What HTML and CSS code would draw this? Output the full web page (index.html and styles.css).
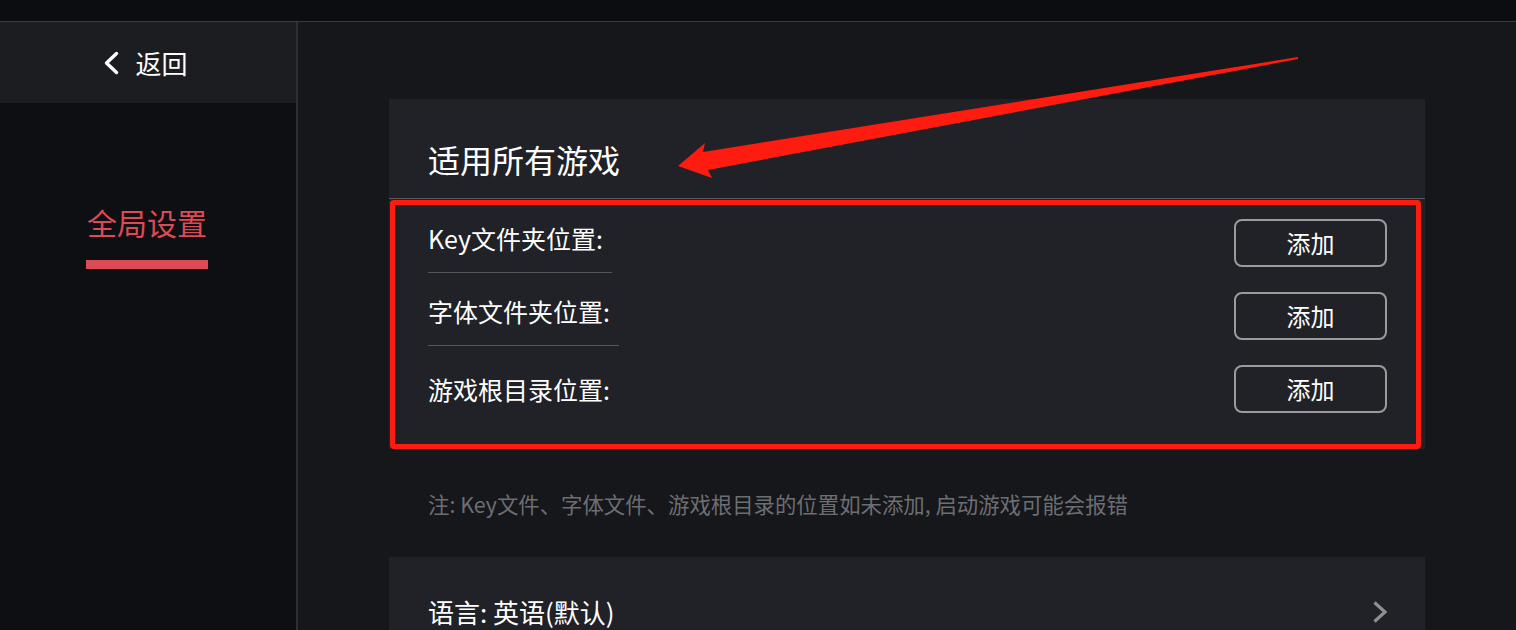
FILE: index.html
```html
<!DOCTYPE html>
<html lang="zh-CN">
<head>
    <meta charset="UTF-8">
    <meta name="viewport" content="width=device-width, initial-scale=1.0">
    <title>全局设置</title>
    <link rel="stylesheet" href="styles.css">
</head>
<body>
    <div class="topbar"></div>

    <div class="layout">
        <aside class="sidebar">
            <div class="sidebar-head">
                <svg class="back-icon" width="16" height="24" viewBox="0 0 16 24"><polyline points="13.5,2.5 3.5,12 13.5,21.5" fill="none" stroke="#fff" stroke-width="3.4" stroke-linecap="round" stroke-linejoin="round"/></svg>
                <span class="back-text">返回</span>
            </div>
            <nav class="nav">
                <div class="nav-item active">全局设置</div>
            </nav>
        </aside>

        <main class="main">
            <section class="card">
                <h2 class="card-head">适用所有游戏</h2>
                <div class="card-body">
                    <div class="row">
                        <span class="row-label">Key文件夹位置:</span>
                        <button type="button" class="add-btn">添加</button>
                    </div>
                    <div class="row">
                        <span class="row-label">字体文件夹位置:</span>
                        <button type="button" class="add-btn">添加</button>
                    </div>
                    <div class="row">
                        <span class="row-label last">游戏根目录位置:</span>
                        <button type="button" class="add-btn">添加</button>
                    </div>
                </div>
            </section>

            <p class="note">注: Key文件、字体文件、游戏根目录的位置如未添加, 启动游戏可能会报错</p>

            <section class="card lang">
                <span class="lang-label">语言: 英语(默认)</span>
                <svg class="more-icon" width="16" height="24" viewBox="0 0 16 24"><polyline points="2.5,2.5 13,12 2.5,21.5" fill="none" stroke="#8e8f91" stroke-width="3.2" stroke-linejoin="miter"/></svg>
            </section>
        </main>
    </div>

    <!-- annotation arrow drawn over the page -->
    <svg class="arrow" width="1516" height="630" viewBox="0 0 1516 630">
        <polygon points="1298,57 703,152 705,143 678,166 712,178 708,170 1298,59" fill="#fe1b10"/>
    </svg>
</body>
</html>
```

FILE: styles.css
```css
body{margin:0;width:1516px;height:630px;overflow:hidden;background:#15171b;color:#fff;font-family:"Noto Sans CJK SC","Noto Sans",sans-serif;position:relative}

.topbar{height:21px;background:#0c0d10;border-bottom:1px solid #3a3b3e}
.layout{display:flex;height:608px;overflow:hidden}

/* sidebar */
.sidebar{width:296px;flex:none;background:#0e0f12;border-right:2px solid #2e2f33}
.sidebar-head{height:81px;background:#1c1d20;display:flex;align-items:center;justify-content:center;padding-right:5px;box-sizing:border-box}
.back-icon{margin-right:16px}
.back-text{font-size:26px;line-height:30px}
.nav{display:flex;justify-content:center;padding-top:101px;padding-right:2px}
.nav-item{font-size:30px;line-height:36px;color:#dc4a55;padding-bottom:20px;border-bottom:9px solid #dc4a55;padding-left:1px;padding-right:1px}

/* main */
.main{flex:1;padding:77px 91px 0;overflow:hidden}
.card{background:#202227}
.card-head{margin:0;font-weight:400;font-size:32px;line-height:40px;padding:40px 39px 19px;border-bottom:1px solid #5a5b5e}
.card-body{margin:1px 4px 1px 1px;border:5px solid #fe1b10;border-radius:4px;padding:1px 29px 19px 33px}
.row{height:73px;display:flex;align-items:center;justify-content:space-between}
.row-label{font-size:25px;line-height:30px;margin-top:10px;padding-bottom:19px;padding-right:9px;border-bottom:1px solid #55565a}
.row-label.last{margin-top:0;padding-bottom:0;border-bottom:none}
.add-btn{width:153px;height:48px;background:transparent;border:2px solid #9b9b9d;border-radius:8px;color:#fff;font-family:inherit;font-size:24px;padding:0}

.note{margin:41px 0 39px;padding-left:39px;font-size:21.4px;line-height:28px;color:#6d6e72}

.lang{display:flex;align-items:center;justify-content:space-between;padding:40px 37px 40px 39px}
.lang-label{font-size:26px;line-height:30px}

.arrow{position:absolute;left:0;top:0;pointer-events:none}
```
